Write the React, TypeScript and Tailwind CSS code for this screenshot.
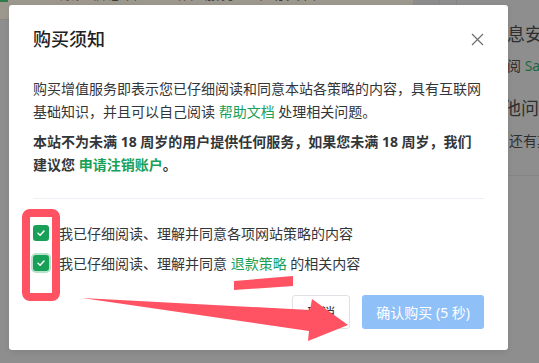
import React from 'react';

const FONT = "font-['Noto_Sans','Noto_Sans_CJK_SC',sans-serif]";

const CheckBox = ({ focused }: { focused?: boolean }) => (
  <span
    className={
      'flex h-[16px] w-[16px] shrink-0 items-center justify-center rounded-[3px] bg-[#18a058] ' +
      (focused ? 'shadow-[0_0_0_2px_rgba(24,160,88,0.3)]' : '')
    }
  >
    <svg width="10" height="10" viewBox="0 0 10 10" fill="none">
      <path d="M2 5.2 L4.1 7.2 L8 3" stroke="#fff" strokeWidth="1.5" strokeLinecap="round" strokeLinejoin="round" />
    </svg>
  </span>
);

export default function App() {
  return (
    <div className={`relative h-[363px] w-[539px] overflow-hidden bg-[#8e8e8e] ${FONT}`}>
      {/* dimmed page behind the mask */}
      <div className="flex h-[20px]">
        <div className="relative w-[413px] overflow-hidden border-b border-[#8a8780] bg-[#9d988e]">
          <div className="absolute left-0 top-0 h-[2px] w-[8px] bg-[#2f7a4b]" />
          <div className="mt-[-14px] pl-[60px] text-[14px] leading-[16px] tracking-[2px] text-[#3a3a3a]">
            账户信息管理 · 增值服务 · 帮助文档
          </div>
        </div>
        <div className="w-[27px] border-r border-[#868686] bg-[#8c8c8c]" />
        <div className="w-[17px] border-r border-[#868686]" />
      </div>
      <div className="text-[#2e2e2e]">
        <div className="ml-[489px] mt-[4px] whitespace-nowrap text-[18px] leading-[20px]">信息安全</div>
        <div className="ml-[493px] mt-[13px] whitespace-nowrap text-[14px] leading-[18px]">
          查阅 <span className="text-[#1b6a3d]">Sa</span>
        </div>
        <div className="ml-[485px] mt-[23px] whitespace-nowrap text-[18px] leading-[20px]">其他问题</div>
        <div className="ml-[509px] mt-[14px] whitespace-nowrap text-[14px] leading-[18px]">还有其他</div>
        <div className="ml-[508px] mt-[25px] h-[1px] bg-[#858585]" />
      </div>

      {/* modal */}
      <div className="absolute left-[9px] top-[5px] flex h-[345px] w-[499px] flex-col rounded-[3px] bg-white px-[24px] shadow-[0_2px_6px_rgba(0,0,0,0.08)]">
        <div className="mt-[21px] flex h-[26px] items-center justify-between">
          <span className="text-[18px] font-medium leading-[26px] text-[#1f2225]">购买须知</span>
          <svg width="13" height="13" viewBox="0 0 13 13">
            <path d="M1 1 L12 12 M12 1 L1 12" stroke="#6b6f73" strokeWidth="1.2" />
          </svg>
        </div>

        <p className="mt-[25px] text-[14px] leading-[23px] text-[#333639]">
          购买增值服务即表示您已仔细阅读和同意本站各策略的内容，具有互联网基础知识，并且可以自己阅读{' '}
          <span className="text-[#18a058]">帮助文档</span> 处理相关问题。
        </p>
        <p className="mt-[7px] text-[14px] font-bold leading-[23px] text-[#333639]">
          本站不为未满 18 周岁的用户提供任何服务，如果您未满 18 周岁，我们建议您{' '}
          <span className="text-[#18a058]">申请注销账户</span>。
        </p>

        <div className="mt-[22px] h-[1px] bg-[#efeff5]" />

        <div className="mt-[23px] flex h-[22px] items-center gap-[10px] text-[14px] text-[#333639]">
          <CheckBox />
          <span>我已仔细阅读、理解并同意各项网站策略的内容</span>
        </div>
        <div className="mt-[8px] flex h-[22px] items-center gap-[10px] text-[14px] text-[#333639]">
          <CheckBox focused />
          <span>
            我已仔细阅读、理解并同意 <span className="text-[#18a058]">退款策略</span> 的相关内容
          </span>
        </div>

        <div className="mt-[21px] flex justify-end gap-[12px]">
          <button className="h-[34px] rounded-[3px] border border-[#e0e0e6] bg-white px-[14px] text-[14px] text-[#333639]">
            取消
          </button>
          <button className="h-[34px] rounded-[3px] bg-[#90c0f8] px-[14px] text-[14px] text-white">
            确认购买 (5 秒)
          </button>
        </div>
      </div>

      {/* red annotations */}
      <svg className="pointer-events-none absolute left-0 top-0" width="539" height="363" viewBox="0 0 539 363">
        <rect x="26" y="213" width="30" height="84" rx="4" fill="none" stroke="#ff5263" strokeWidth="8" />
        <polygon points="234,281 293,276 293,286 234,290" fill="#ff5263" />
        <polygon points="82,298 310,310 312,299 348,325 308,341 309,331" fill="#ff5263" />
      </svg>
    </div>
  );
}
